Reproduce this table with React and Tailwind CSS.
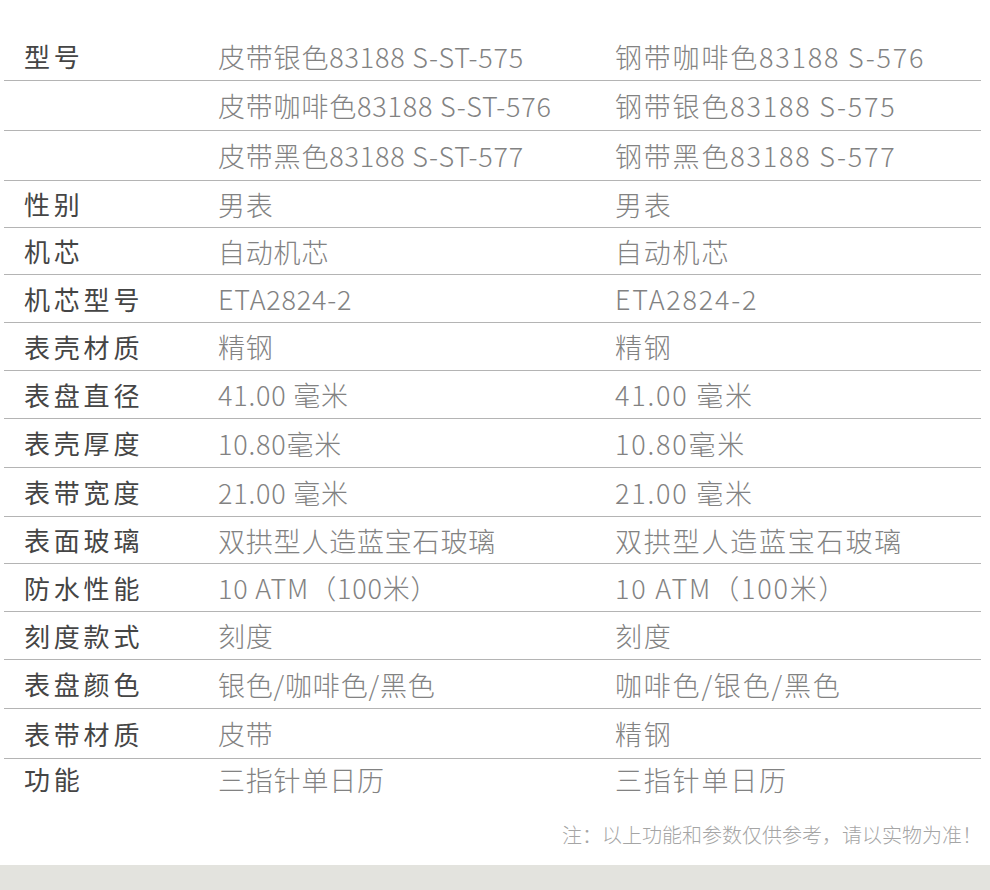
import React from 'react';

const rows = [
  { label: '型号', a: '皮带银色83188 S-ST-575', b: '钢带咖啡色83188 S-576', h: 'h-[49px]' },
  { label: '', a: '皮带咖啡色83188 S-ST-576', b: '钢带银色83188 S-575', h: 'h-[50px]' },
  { label: '', a: '皮带黑色83188 S-ST-577', b: '钢带黑色83188 S-577', h: 'h-[50px]' },
  { label: '性别', a: '男表', b: '男表', h: 'h-[47px]' },
  { label: '机芯', a: '自动机芯', b: '自动机芯', h: 'h-[47px]' },
  { label: '机芯型号', a: 'ETA2824-2', b: 'ETA2824-2', h: 'h-[48px]' },
  { label: '表壳材质', a: '精钢', b: '精钢', h: 'h-[48px]' },
  { label: '表盘直径', a: '41.00 毫米', b: '41.00 毫米', h: 'h-[48px]' },
  { label: '表壳厚度', a: '10.80毫米', b: '10.80毫米', h: 'h-[49px]' },
  { label: '表带宽度', a: '21.00 毫米', b: '21.00 毫米', h: 'h-[49px]' },
  { label: '表面玻璃', a: '双拱型人造蓝宝石玻璃', b: '双拱型人造蓝宝石玻璃', h: 'h-[47px]' },
  { label: '防水性能', a: '10 ATM（100米）', b: '10 ATM（100米）', h: 'h-[48px]' },
  { label: '刻度款式', a: '刻度', b: '刻度', h: 'h-[48px]' },
  { label: '表盘颜色', a: '银色/咖啡色/黑色', b: '咖啡色/银色/黑色', h: 'h-[49px]' },
  { label: '表带材质', a: '皮带', b: '精钢', h: 'h-[50px]' },
  { label: '功能', a: '三指针单日历', b: '三指针单日历', h: 'h-[40px]' },
];

export default function App() {
  return (
    <div className="w-[990px] h-[890px] bg-white flex flex-col font-['Noto_Sans_CJK_SC','Noto_Sans',sans-serif]">
      <div className="pt-[32px] ml-[4px] w-[977px]">
        {rows.map((r, i) => (
          <div
            key={i}
            className={`flex items-center ${r.h} ${i < rows.length - 1 ? 'border-b border-[#b4b4b4]' : ''}`}
          >
            <div className="w-[214px] pl-[20px] text-[26px] text-[#454545] tracking-[3.8px] leading-none">
              {r.label}
            </div>
            <div className="w-[397px] font-['Noto_Sans_CJK_SC_Light','Noto_Sans_CJK_SC',sans-serif] text-[27px] font-light text-[#828282] tracking-[0.8px] leading-none whitespace-nowrap">
              {r.a}
            </div>
            <div className="flex-1 font-['Noto_Sans_CJK_SC_Light','Noto_Sans_CJK_SC',sans-serif] text-[27px] font-light text-[#828282] tracking-[1.8px] leading-none whitespace-nowrap">
              {r.b}
            </div>
          </div>
        ))}
      </div>
      <div className="h-[66px] flex items-center justify-end pr-[8px] pt-[6px] text-[20px] text-[#a5a5a5] font-light">
        注：以上功能和参数仅供参考，请以实物为准！
      </div>
      <div className="flex-1 bg-[#e3e3de]" />
    </div>
  );
}
